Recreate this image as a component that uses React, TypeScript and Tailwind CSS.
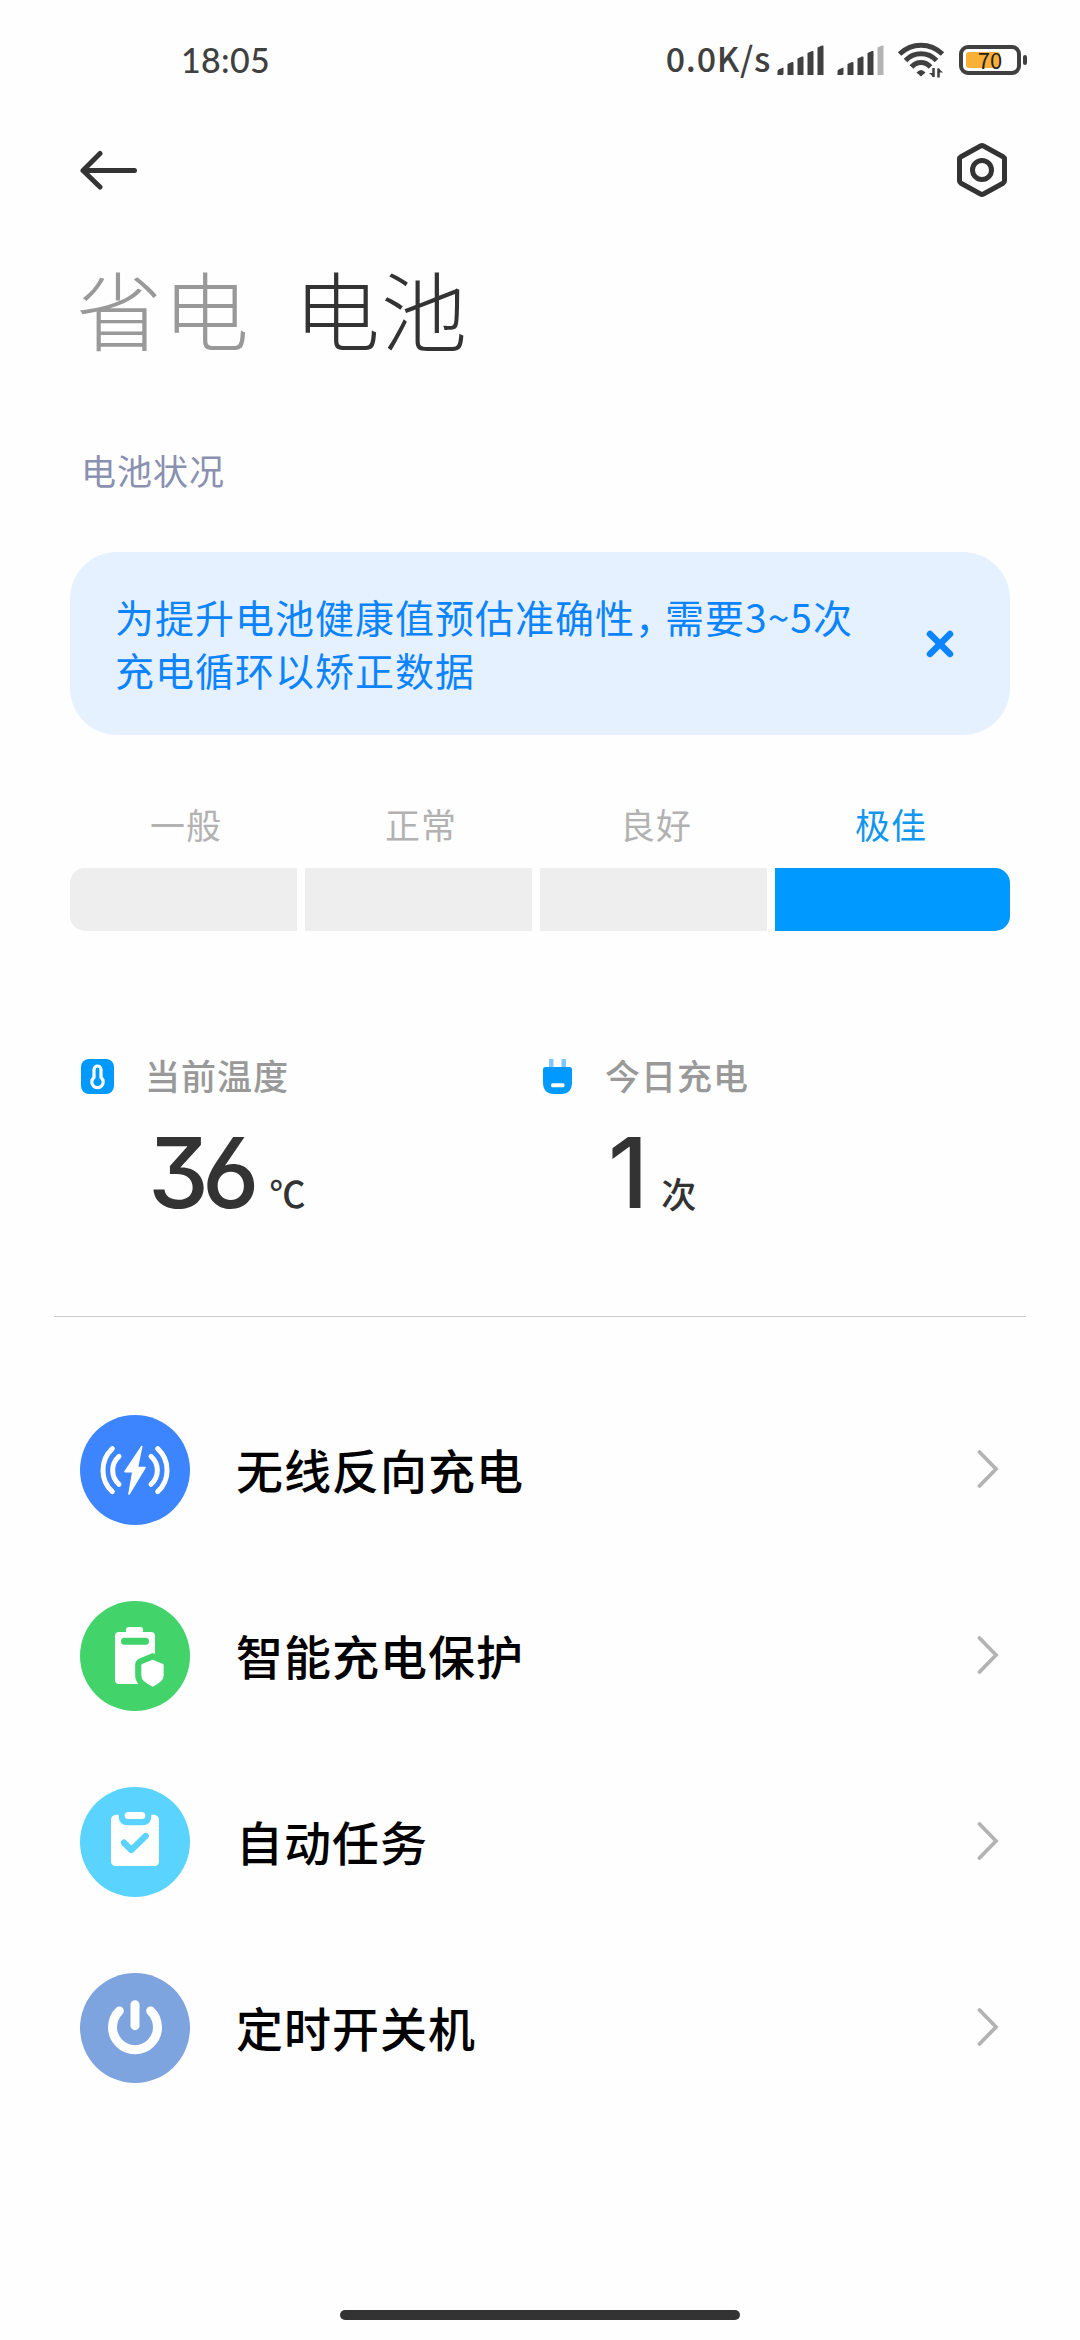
import type { ReactNode } from 'react'

const cjk = "font-['Noto_Sans_CJK_SC',sans-serif]"

function SignalBars({ dimLast = false }: { dimLast?: boolean }) {
  return (
    <svg viewBox="0 0 48 30" className="h-[30px] w-12" fill="#404040">
      <path d="M0.5 30V26.5Q0.5 25 2 24.2L6.5 22.5V28.5Q6.5 30 5 30Z" />
      <path d="M10.5 30V19L15 17Q16.5 16.6 16.5 18V30Z" />
      <path d="M20.5 30V13.5L25 11.5Q26.5 11 26.5 12.5V30Z" />
      <path d="M30.5 30V8L35 6Q36.5 5.5 36.5 7V30Z" />
      <path d="M40.5 30V2.5L45 0.5Q46.5 0 46.5 1.5V30Z" fill={dimLast ? '#b3b3b3' : '#404040'} />
    </svg>
  )
}

function WifiIcon() {
  return (
    <svg viewBox="0 0 48 36" className="h-9 w-12" fill="none" stroke="#404040" strokeWidth="5">
      <path d="M2.5 12Q12 3.2 24 3.2T45.5 12" />
      <path d="M8.5 18.5Q15 11.8 24 11.8T39.5 18.5" />
      <path d="M14.5 25Q18.5 20.4 24 20.4T33.5 25" />
      <path d="M19.5 30.5Q24 25.5 28.5 30.5L24 34.5Z" fill="#404040" stroke="none" />
      <path d="M36.5 26V35M41.5 26.5V35.5" strokeWidth="2.5" />
      <path d="M32 31H37V35.5ZM46 30.5H41V26Z" fill="#404040" stroke="none" />
    </svg>
  )
}

function StatusBar() {
  return (
    <div className="flex h-[120px] items-center justify-between pl-[181px] pr-[53px] text-[#404040]">
      <span className="pb-px font-['Lato',sans-serif] text-[34px] font-medium leading-none tracking-[0.3px]">18:05</span>
      <div className="flex items-center">
        <span className="mr-[6px] pb-1 font-['Noto_Sans_CJK_SC',sans-serif] text-[34px] font-medium leading-none tracking-[0.7px]">
          0.0K/s
        </span>
        <SignalBars />
        <div className="ml-3">
          <SignalBars dimLast />
        </div>
        <div className="ml-3">
          <WifiIcon />
        </div>
        <div className="ml-[14px] flex items-center gap-[2px]">
          <div className="relative h-[30px] w-[62px] rounded-[9px] border-4 border-[#404040] p-[3px]">
            <div className="h-4 w-[34px] rounded-[3px] bg-[#f8b036]" />
            <span className="absolute inset-0 flex items-center justify-center pb-[3px] font-['Noto_Sans_CJK_SC',sans-serif] text-[22px] leading-none text-[#222]">
              70
            </span>
          </div>
          <div className="h-[10px] w-1 rounded-[2px] bg-[#404040]" />
        </div>
      </div>
    </div>
  )
}

function TopBar() {
  return (
    <div className="flex h-[100px] items-center justify-between pl-20 pr-[72px]">
      <button>
        <svg viewBox="0 0 58 40" className="h-10 w-[58px]" fill="none" stroke="#333" strokeWidth="5" strokeLinecap="round" strokeLinejoin="round">
          <path d="M54.5 20.5H3M20 3.5L3 20.5L20 37" />
        </svg>
      </button>
      <button>
        <svg viewBox="0 0 52 56" className="h-14 w-[52px]" fill="none" stroke="#333" strokeWidth="5" strokeLinejoin="round">
          <path d="M24.5 4Q26 3.2 27.5 4L47 14.7Q48.5 15.6 48.5 17.3V38.7Q48.5 40.4 47 41.3L27.5 52Q26 52.8 24.5 52L5 41.3Q3.5 40.4 3.5 38.7V17.3Q3.5 15.6 5 14.7Z" />
          <circle cx="26" cy="28" r="9.5" />
        </svg>
      </button>
    </div>
  )
}

function ThermometerIcon() {
  return (
    <svg viewBox="0 0 33 35" className="h-[35px] w-[33px]">
      <rect width="33" height="35" rx="8" fill="#09f" />
      <path
        d="M13 18.5V10.5A3.5 3.5 0 0 1 20 10.5V18.5A5.7 5.7 0 1 1 13 18.5Z"
        fill="none"
        stroke="#fff"
        strokeWidth="3.2"
      />
    </svg>
  )
}

function PlugIcon() {
  return (
    <svg viewBox="0 0 29 35" className="ml-[2px] h-[35px] w-[29px]">
      <path d="M6 0H10.5V8H6ZM18.5 0H23V8H18.5Z" fill="#80c8ff" />
      <path d="M2.5 8H26.5Q29 8 29 10.5V23Q29 35 18 35H11Q0 35 0 23V10.5Q0 8 2.5 8Z" fill="#09f" />
      <rect x="8" y="24.2" width="13.5" height="4" rx="1.5" fill="#fff" />
    </svg>
  )
}

interface StatProps {
  icon: ReactNode
  label: string
  value: string
  unit: ReactNode
}

function Stat({ icon, label, value, unit }: StatProps) {
  return (
    <div className="w-[460px]">
      <div className="flex h-9 items-center">
        <div className="flex w-[64px]">{icon}</div>
        <span className={`${cjk} pb-[3px] text-[35px] font-medium leading-none tracking-[1px] text-[#999]`}>{label}</span>
      </div>
      <div className="mt-[29px] flex items-baseline pl-[67px] text-[#333]">
        <span className="font-['Inter',sans-serif] text-[97px] font-[450] leading-[100px] tracking-[-7px] [font-feature-settings:'cv03','cv09']">
          {value}
        </span>
        {unit}
      </div>
    </div>
  )
}

function WirelessIcon() {
  return (
    <svg viewBox="0 0 330 330" className="size-[110px]">
      <g fill="none" stroke="#fff" strokeWidth="15" strokeLinecap="round">
        <path d="M97 101A88 88 0 0 0 97 230M233 101A88 88 0 0 1 233 230" />
        <path d="M117 124A56 56 0 0 0 117 208M213 124A56 56 0 0 1 213 208" />
      </g>
      <path d="M185 95L135 170H159L147 237L195 158H172Z" fill="#fff" stroke="#fff" strokeWidth="5" strokeLinejoin="round" />
    </svg>
  )
}

function BatteryShieldIcon() {
  const shield = 'M218 176L249 189Q251 190 251 193V224Q251 241 218 257Q184 241 184 224V193Q184 190 186 189Z'
  return (
    <svg viewBox="0 0 330 330" className="size-[110px]" fill="#fff">
      <path d="M138 93V86Q138 78 146 78H181Q189 78 189 86V93H213Q225 93 225 105V249H117Q105 249 105 237V105Q105 93 117 93Z" />
      <rect x="123" y="110" width="84" height="21" rx="10.5" fill="#42d36b" />
      <path d={shield} fill="#42d36b" stroke="#42d36b" strokeWidth="37" />
      <path d={shield} />
    </svg>
  )
}

function ClipboardIcon() {
  return (
    <svg viewBox="0 0 330 330" className="size-[110px]" fill="#fff">
      <path d="M107 83H116V87Q116 115 144 115H186Q214 115 214 87V83H223Q237 86 237 98V223Q237 237 223 237H107Q93 237 93 223V98Q93 86 107 83Z" />
      <rect x="134" y="75" width="62" height="21" rx="10.5" />
      <path d="M132 167L154 189L197 147" fill="none" stroke="#5ad4ff" strokeWidth="19" strokeLinecap="round" strokeLinejoin="round" />
    </svg>
  )
}

function PowerIcon() {
  return (
    <svg viewBox="0 0 330 330" className="size-[110px]" fill="none" stroke="#fff" strokeWidth="27" strokeLinecap="round">
      <path d="M118 114A67.5 67.5 0 1 0 212 114" />
      <path d="M165 95V158" />
    </svg>
  )
}

const levels = [
  { label: '一般', bar: 'mr-2 rounded-l-[15px] bg-[#eee]', text: 'text-[#b2b2b2]' },
  { label: '正常', bar: 'mr-2 bg-[#eee]', text: 'text-[#b2b2b2]' },
  { label: '良好', bar: 'mr-2 bg-[#eee]', text: 'text-[#b2b2b2]' },
  { label: '极佳', bar: 'rounded-r-[15px] bg-[#09f]', text: 'text-[#1296f0]' },
]

const menu = [
  { label: '无线反向充电', color: 'bg-[#3d84ff]', icon: <WirelessIcon /> },
  { label: '智能充电保护', color: 'bg-[#42d36b]', icon: <BatteryShieldIcon /> },
  { label: '自动任务', color: 'bg-[#5ad4ff]', icon: <ClipboardIcon /> },
  { label: '定时开关机', color: 'bg-[#7ea4df]', icon: <PowerIcon /> },
]

export default function App() {
  return (
    <div className="flex h-[2340px] w-[1080px] flex-col overflow-hidden bg-[#fefefe]">
      <StatusBar />
      <TopBar />

      <div className={`${cjk} mt-[38px] flex gap-[44px] pl-[76px] text-[86px] font-light leading-[100px] tracking-[1px]`}>
        <span className="text-[#999]">省电</span>
        <span className="text-[#333]">电池</span>
      </div>

      <h2 className={`${cjk} mt-[92px] pl-[81px] text-[35px] leading-[40px] tracking-[1px] text-[#8a90b0]`}>电池状况</h2>

      <div className="mx-[70px] mt-[62px] flex h-[183px] items-center justify-between rounded-[47px] bg-[#e5f1ff] pl-[45px] pr-[56px]">
        <p className={`${cjk} pb-[2px] text-[39px] leading-[53px] tracking-[1px] text-[#0d84ff]`}>
          为提升电池健康值预估准确性<span className="tracking-[-9px]">，</span>需要3~5次
          <br />
          充电循环以矫正数据
        </p>
        <svg viewBox="0 0 28 28" className="size-7" fill="none" stroke="#0d84ff" strokeWidth="6.5" strokeLinecap="round">
          <path d="M4 4L24 24M24 4L4 24" />
        </svg>
      </div>

      <div className="mx-[70px] mt-[69px] flex">
        {levels.map((level) => (
          <div key={level.label} className="w-[235px]">
            <div className={`${cjk} pr-[3px] text-center text-[35px] leading-[40px] tracking-[1px] ${level.text}`}>{level.label}</div>
            <div className={`mt-6 h-[63px] ${level.bar}`} />
          </div>
        ))}
      </div>

      <div className="mt-[127px] flex pl-[81px]">
        <Stat
          icon={<ThermometerIcon />}
          label="当前温度"
          value="36"
          unit={<span className={`${cjk} ml-[17px] text-[36px] font-medium leading-none`}>℃</span>}
        />
        <Stat
          icon={<PlugIcon />}
          label="今日充电"
          value="1"
          unit={<span className={`${cjk} ml-[20px] text-[35px] font-medium leading-none`}>次</span>}
        />
      </div>

      <div className="mx-[54px] mt-[93px] h-px bg-[#cccccc]" />

      <div className="mt-[60px]">
        {menu.map((item) => (
          <div key={item.label} className="flex h-[186px] items-center pl-20 pr-20">
            <div className={`size-[110px] rounded-full ${item.color}`}>{item.icon}</div>
            <span className={`${cjk} ml-[46px] flex-1 pb-1 text-[47px] font-medium leading-none tracking-[1px] text-black`}>{item.label}</span>
            <svg viewBox="0 0 24 40" className="h-10 w-6" fill="none" stroke="#b3b3b3" strokeWidth="3.8" strokeLinecap="round">
              <path d="M3.5 2L20 19L3.5 36" />
            </svg>
          </div>
        ))}
      </div>

      <div className="mx-auto mt-auto mb-5 h-[10px] w-[400px] rounded-full bg-[#333]" />
    </div>
  )
}
